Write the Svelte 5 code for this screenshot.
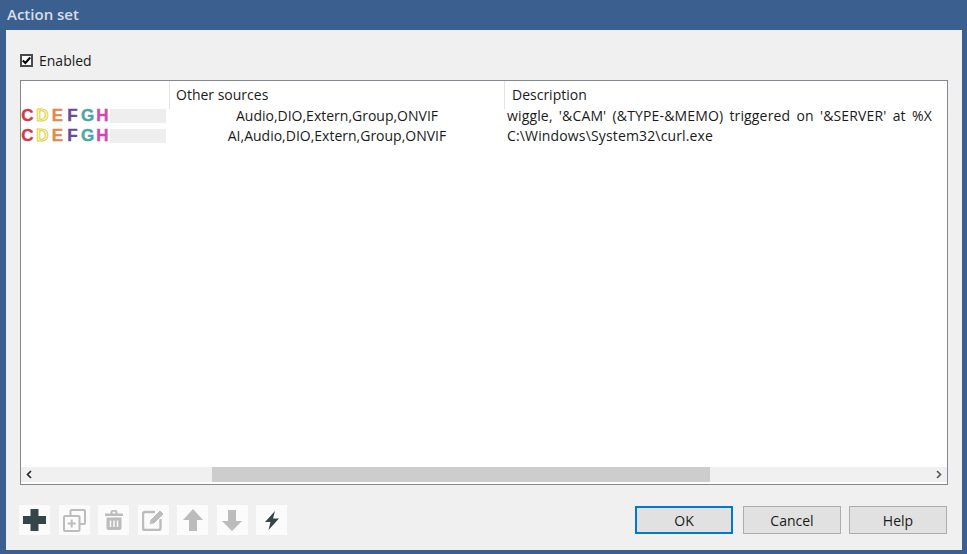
<script lang="ts">
  const letters = [
    { ch: 'C', cls: 'c' },
    { ch: 'D', cls: 'd' },
    { ch: 'E', cls: 'e' },
    { ch: 'F', cls: 'f' },
    { ch: 'G', cls: 'g' },
    { ch: 'H', cls: 'h' }
  ]

  const rows = [
    {
      sources: 'Audio,DIO,Extern,Group,ONVIF',
      description: "wiggle, '&CAM' (&TYPE-&MEMO) triggered on '&SERVER' at %X"
    },
    {
      sources: 'AI,Audio,DIO,Extern,Group,ONVIF',
      description: 'C:\\Windows\\System32\\curl.exe'
    }
  ]
</script>

<div class="window">
  <div class="titlebar">Action set</div>

  <div class="client">
    <label class="enabled">
      <span class="check">
        <svg width="9" height="9" viewBox="0 0 9 9"><path d="M0.8 4.500 L3.400 7 L8.200 1.500" fill="none" stroke="#000" stroke-width="2"/></svg>
      </span>
      <span>Enabled</span>
    </label>

    <div class="table">
      <div class="body">
        <div class="row head">
          <div class="col-icons"></div>
          <div class="col-src">Other sources</div>
          <div class="col-desc">Description</div>
        </div>
        {#each rows as row}
          <div class="row item">
            <div class="col-icons">
              <div class="letters">
                {#each letters as l}
                  <span class="letter {l.cls}">{l.ch}</span>
                {/each}
              </div>
              <div class="filler"></div>
            </div>
            <div class="col-src">{row.sources}</div>
            <div class="col-desc">{row.description}</div>
          </div>
        {/each}
      </div>

      <div class="hscroll">
        <svg class="arrow" width="9" height="9" viewBox="0 0 9 9"><path d="M6 1 L2.500 4.500 L6 8" fill="none" stroke="#222" stroke-width="1.600"/></svg>
        <div class="track"><div class="thumb"></div></div>
        <svg class="arrow" width="9" height="9" viewBox="0 0 9 9"><path d="M3 1 L6.500 4.500 L3 8" fill="none" stroke="#555" stroke-width="1.600"/></svg>
      </div>
    </div>

    <div class="footer">
      <div class="tools">
        <button class="tool" aria-label="Add">
          <svg width="23" height="22" viewBox="0 0 23 22"><path d="M7.500 0 h8 v7 h7.500 v8 h-7.500 v7 h-8 v-7 h-7.500 v-8 h7.500 z" fill="#36454a"/></svg>
        </button>
        <button class="tool" aria-label="Duplicate">
          <svg width="23" height="23" viewBox="0 0 23 23" fill="none" stroke="#bcbcbc" stroke-width="2">
            <path d="M7.500 6 V2 a1 1 0 0 1 1-1 H21 a1 1 0 0 1 1 1 V14 a1 1 0 0 1-1 1 H16.500"/>
            <rect x="1" y="7" width="15.500" height="15" rx="1"/>
            <path d="M8.700 10.500 v8 M4.700 14.500 h8"/>
          </svg>
        </button>
        <button class="tool" aria-label="Delete">
          <svg width="18" height="20" viewBox="0 0 18 20">
            <path d="M0 3.500 h18 v2.500 h-18 z M5.500 3.500 V2 a2 2 0 0 1 2-2 h3 a2 2 0 0 1 2 2 V3.500 h-2 V1.800 h-3 V3.500 z" fill="#bcbcbc"/>
            <path d="M1.500 7.500 h15 V18 a2 2 0 0 1-2 2 h-11 a2 2 0 0 1-2-2 z" fill="#bcbcbc"/>
            <path d="M5.500 10.500 v6.500 M9 10.500 v6.500 M12.500 10.500 v6.500" stroke="#fbfbfb" stroke-width="1.500"/>
          </svg>
        </button>
        <button class="tool" aria-label="Edit">
          <svg width="23" height="22" viewBox="0 0 23 22">
            <path d="M13 3 H3 a2 2 0 0 0-2 2 V19 a2 2 0 0 0 2 2 H16.500 a2 2 0 0 0 2-2 V10" fill="none" stroke="#bcbcbc" stroke-width="2.400"/>
            <path d="M7 15.500 L8 11 L18 1 L22 5 L12 15 z" fill="#bcbcbc" stroke="#fbfbfb" stroke-width="1"/>
          </svg>
        </button>
        <button class="tool" aria-label="Move up">
          <svg width="20" height="22" viewBox="0 0 20 22"><path d="M10 0 L20 11 H14 V22 H6 V11 H0 z" fill="#bcbcbc"/></svg>
        </button>
        <button class="tool" aria-label="Move down">
          <svg width="20" height="21" viewBox="0 0 20 21"><path d="M10 21 L20 11 H14 V0 H6 V11 H0 z" fill="#bcbcbc"/></svg>
        </button>
        <button class="tool" aria-label="Trigger">
          <svg width="14" height="19" viewBox="0 0 14 19"><path d="M10 0 L0 11 H5.500 L3.500 19 L14 7.500 H8 z" fill="#36454a"/></svg>
        </button>
      </div>

      <div class="actions">
        <button class="btn default">OK</button>
        <button class="btn cancel">Cancel</button>
        <button class="btn help">Help</button>
      </div>
    </div>
  </div>
</div>

<style>
  :global(body) {
    margin: 0;
    background: #3b5f8f;
  }

  .window {
    width: 967px;
    height: 554px;
    display: flex;
    flex-direction: column;
    background: #3b5f8f;
    font-family: "Open Sans", "Noto Sans", sans-serif;
    font-size: 14px;
    color: #1a1a1a;
    overflow: hidden;
  }

  .titlebar {
    height: 30px;
    flex-shrink: 0;
    padding-left: 7px;
    line-height: 29px;
    font-size: 15px;
    font-weight: 600;
    color: #d8dee8;
  }

  .client {
    flex: 1;
    margin: 0 5px 4px 6px;
    padding: 0 14px 0 14px;
    background: #f0f0f0;
    display: flex;
    flex-direction: column;
    min-height: 0;
  }

  .enabled {
    height: 50px;
    flex-shrink: 0;
    display: flex;
    align-items: center;
    gap: 6px;
    padding-top: 11px;
    box-sizing: border-box;
  }

  .check {
    width: 13px;
    height: 13px;
    box-sizing: border-box;
    border: 2px solid #4a4a4a;
    background: #fff;
    display: flex;
    align-items: center;
    justify-content: center;
  }

  .table {
    height: 405px;
    flex-shrink: 0;
    box-sizing: border-box;
    border: 1px solid #828790;
    background: #fff;
    display: flex;
    flex-direction: column;
  }

  .body {
    flex: 1;
    min-height: 0;
    overflow: hidden;
  }

  .row {
    display: grid;
    grid-template-columns: 148px 335px 1fr;
    white-space: nowrap;
  }

  .head {
    height: 24px;
    line-height: 28px;
    margin-bottom: 1px;
  }

  .head .col-src {
    border-left: 1px solid #e4e4e4;
    padding-left: 6px;
    text-align: left;
  }

  .head .col-desc {
    border-left: 1px solid #e4e4e4;
    padding-left: 7px;
  }

  .item {
    height: 20px;
    line-height: 20px;
  }

  .col-icons {
    display: flex;
    align-items: center;
  }

  .letters {
    width: 89px;
    height: 14px;
    display: flex;
    flex-shrink: 0;
    box-sizing: border-box;
    margin-left: -1px;
    margin-right: 1px;
    align-items: center;
  }

  .letter {
    width: 15px;
    text-align: center;
    font-family: "Liberation Sans", sans-serif;
    font-size: 17px;
    font-weight: 700;
    line-height: 14px;
    flex-shrink: 0;
    -webkit-text-stroke: 0.4px currentColor;
  }

  .c { color: #d23b45; }
  .d { color: #fdfbd8; -webkit-text-stroke: 1px #dcd33c; }
  .e { color: #e08a4a; }
  .f { color: #6e4a96; }
  .g { color: #4aa8a0; }
  .h { color: #cf4ab0; }

  .filler {
    width: 56px;
    height: 14px;
    background: #eeeeee;
  }

  .item .col-src {
    text-align: center;
    padding-left: 1px;
  }

  .item .col-desc {
    padding-left: 3px;
    overflow: hidden;
    word-spacing: 2.4px;
    letter-spacing: 0.15px;
  }

  .hscroll {
    height: 15px;
    flex-shrink: 0;
    margin-bottom: 2px;
    display: flex;
    align-items: center;
    background: #f0f0f0;
  }

  .arrow {
    width: 17px;
    flex-shrink: 0;
  }

  .track {
    flex: 1;
    height: 100%;
    padding-left: 174px;
    box-sizing: border-box;
  }

  .thumb {
    width: 498px;
    height: 100%;
    background: #cdcdcd;
  }

  .footer {
    flex: 1;
    display: flex;
    justify-content: space-between;
    align-items: flex-start;
    padding-right: 1px;
  }

  .tools {
    display: flex;
    gap: 8.5px;
    margin-top: 20px;
    margin-left: -1px;
  }

  .tool {
    width: 31px;
    height: 30px;
    padding: 0;
    border: none;
    background: #fbfbfb;
    display: flex;
    align-items: center;
    justify-content: center;
  }

  .actions {
    display: flex;
    margin-top: 21px;
  }

  .btn {
    width: 98px;
    height: 28px;
    box-sizing: border-box;
    padding: 0;
    border: 1px solid #adadad;
    background: #e1e1e1;
    font: inherit;
    color: #1a1a1a;
  }

  .btn.default {
    border: 2px solid #0078d7;
  }

  .btn.cancel {
    margin-left: 10px;
  }

  .btn.help {
    margin-left: 8px;
  }
</style>
